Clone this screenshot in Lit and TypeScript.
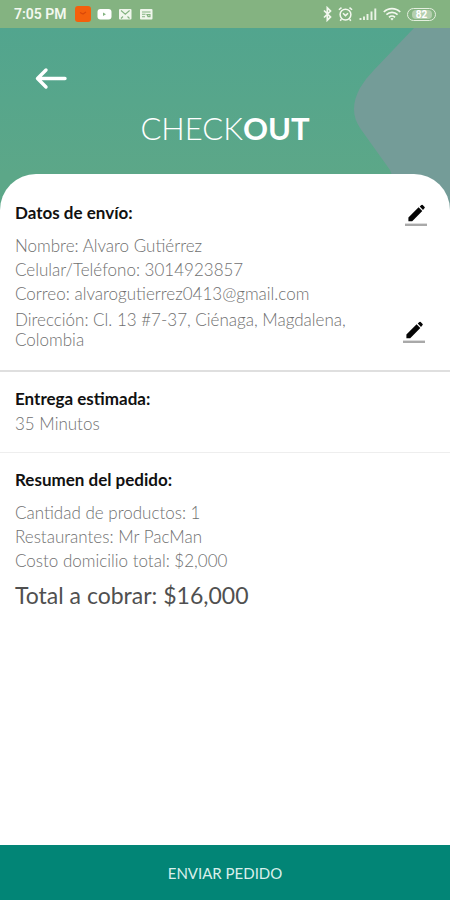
import { LitElement, html, css } from "lit";
import { customElement, property } from "lit/decorators.js";

@customElement("status-bar")
class StatusBar extends LitElement {
  static styles = css`
    :host {
      display: flex;
      align-items: center;
      justify-content: space-between;
      height: 28px;
      padding: 0 14px;
      background: #84b381;
      color: #f3f8ef;
      font-family: Roboto, "Liberation Sans", sans-serif;
    }
    .group {
      display: flex;
      align-items: center;
      gap: 6px;
    }
    .time {
      padding-right: 2px;
      font-size: 14px;
      line-height: 16px;
      font-weight: 600;
    }
    svg {
      display: block;
    }
    .battery {
      box-sizing: border-box;
      display: flex;
      align-items: center;
      justify-content: center;
      width: 29px;
      height: 13px;
      border: 1px solid #e4efdf;
      border-radius: 7px;
      padding: 1px 3px;
    }
    .charge {
      width: 20px;
      border-radius: 4px;
      background: #b4cfae;
      font-size: 10px;
      line-height: 9px;
      font-weight: 700;
      text-align: center;
      color: #ffffff;
    }
  `;

  render() {
    return html`
      <div class="group">
        <span class="time">7:05 PM</span>
        <svg width="16" height="16" viewBox="0 0 16 16" aria-hidden="true">
          <rect width="16" height="16" rx="3" fill="#f4600c" />
          <path d="M5 6.5l3 1.5 3-2" fill="none" stroke="#d9480a" stroke-width="1.2" />
        </svg>
        <svg width="15" height="16" viewBox="0 0 15 16" aria-hidden="true">
          <rect x="0.5" y="3" width="14" height="10.5" rx="3" fill="#fff" />
          <path d="M6 6.4v3.6l3-1.8z" fill="#84b381" />
        </svg>
        <svg width="15" height="16" viewBox="0 0 15 16" aria-hidden="true">
          <rect x="1" y="3" width="12.5" height="10.5" rx="1" fill="#eff6ec" />
          <path d="M3 4.5l4.300 3.700 4.300-3.700M3 12.500l2-2M11.500 12.500l-2-2" fill="none" stroke="#84b381" stroke-width="1.100" />
        </svg>
        <svg width="15" height="16" viewBox="0 0 15 16" aria-hidden="true">
          <rect x="1" y="3" width="12.5" height="10.5" rx="1" fill="#eff6ec" />
          <path d="M3 6h8.5M3 8.3h3.5M3 10.8h3M8 8.6h3v2H9z" fill="none" stroke="#84b381" stroke-width="1.1" />
        </svg>
      </div>
      <div class="group">
        <svg width="9" height="16" viewBox="0 0 9 16" aria-hidden="true">
          <path d="M1 4.500l6.500 6.500-3.200 3.200V1.800l3.200 3.200L1 11.500" fill="none" stroke="#f3f8ef" stroke-width="1.700" />
        </svg>
        <svg width="15" height="16" viewBox="0 0 15 16" aria-hidden="true">
          <circle cx="7.5" cy="8.6" r="5.4" fill="none" stroke="#f3f8ef" stroke-width="1.5" />
          <path d="M5 7.200l2.500 2.400L10 7.200M.9 3.800l2.600-2.200M14.100 3.800l-2.600-2.200M3.400 13.200L2.200 14.800M11.600 13.200l1.200 1.600" fill="none" stroke="#f3f8ef" stroke-width="1.500" />
        </svg>
        <svg width="18" height="16" viewBox="0 0 18 16" aria-hidden="true">
          <path d="M1.500 14v-2M5 14v-3.500M8.500 14V8M12.500 14V5.500M16.300 14V2.500" stroke="#eaf3e6" stroke-width="1.900" />
        </svg>
        <svg width="18" height="16" viewBox="0 0 18 16" aria-hidden="true">
          <path d="M.8 6a11.600 11.600 0 0 1 16.400 0M3.400 8.700a8 8 0 0 1 11.200 0M6 11.300a4.300 4.300 0 0 1 6 0" fill="none" stroke="#f3f8ef" stroke-width="1.700" />
          <path d="M9 14.600l-1.600-1.800a2.400 2.400 0 0 1 3.200 0z" fill="#f3f8ef" />
        </svg>
        <div class="battery"><span class="charge">82</span></div>
      </div>
    `;
  }
}

@customElement("edit-button")
class EditButton extends LitElement {
  @property() label = "";

  static styles = css`
    :host {
      display: block;
    }
    button {
      display: block;
      border: 0;
      padding: 0;
      background: none;
      cursor: pointer;
    }
    svg {
      display: block;
    }
  `;

  render() {
    return html`
      <button type="button" aria-label=${this.label}>
        <svg width="24" height="26" viewBox="0 -3 24 26" aria-hidden="true">
          <path d="M4.400 18.200v-3.800L14.600 4.200l3.700 3.700L8.200 18.200zM15.700 3.500l1.700-1.600q.7-.5 1.300 0l1.900 2q.5.600 0 1.200L19 6.900z" fill="#050505" />
          <path d="M1 21.800h22" stroke="#a9a9a9" stroke-width="2.400" />
        </svg>
      </button>
    `;
  }
}

@customElement("app-root")
class AppRoot extends LitElement {
  static styles = css`
    :host {
      display: flex;
      flex-direction: column;
      min-height: 100vh;
      background: #57a58c;
      color: #707070;
      font-family: Lato, "Liberation Sans", sans-serif;
      font-weight: 300;
    }
    .stage {
      position: relative;
      flex: 1;
      display: flex;
      flex-direction: column;
      background: linear-gradient(#52a58e, #5ca788 146px);
    }
    .blob {
      position: absolute;
      top: 0;
      right: 0;
    }
    header {
      position: relative;
      display: flex;
      flex-direction: column;
      padding: 36px 34px 26px;
    }
    .back {
      align-self: flex-start;
      border: 0;
      padding: 0;
      background: none;
      cursor: pointer;
    }
    svg {
      display: block;
    }
    h1 {
      margin: 0;
      padding-top: 16px;
      font-size: 31px;
      line-height: 40px;
      font-weight: 300;
      text-align: center;
      color: #ffffff;
    }
    h1 strong {
      font-weight: 700;
    }
    main {
      position: relative;
      flex: 1;
      border-radius: 36px 36px 0 0;
      background: #ffffff;
    }
    section {
      padding: 14px 15px 16px;
      border-bottom: 1px solid #eeeeee;
    }
    .shipping {
      padding: 26px 15px 20px;
      border-bottom: 2px solid #dfdfdf;
    }
    .summary {
      border-bottom: 0;
    }
    .row {
      display: flex;
      align-items: center;
      justify-content: space-between;
      padding-right: 7px;
    }
    .address {
      padding: 4px 9px 0 0;
    }
    .address p {
      max-width: 360px;
      line-height: 20px;
    }
    h2 {
      margin: 0;
      font-size: 17px;
      line-height: 26px;
      font-weight: 700;
      color: #111111;
    }
    p {
      margin: 0;
      font-size: 17px;
      line-height: 24px;
    }
    .lines {
      padding-top: 8px;
    }
    .total {
      padding-top: 6px;
      font-size: 23px;
      line-height: 32px;
      font-weight: 400;
      color: #505050;
    }
    .send {
      border: 0;
      padding: 0;
      height: 55px;
      background: #028576;
      color: #d9efeb;
      font: 400 15px/24px Lato, "Liberation Sans", sans-serif;
      cursor: pointer;
    }
  `;

  render() {
    return html`
      <status-bar></status-bar>
      <div class="stage">
        <svg class="blob" width="100" height="200" viewBox="0 0 100 200" aria-hidden="true">
          <path d="M64 0H100V200H62L40 142L10 100Q-2 82 10 60Q16 50 24 42Z" fill="#749c98" />
        </svg>
        <header>
          <button class="back" type="button" aria-label="Volver">
            <svg width="34" height="28" viewBox="0 0 34 28" aria-hidden="true">
              <path d="M31 14.500H4M12 6L3.500 14.500L12 23" fill="none" stroke="#fff" stroke-width="3.400" stroke-linecap="round" stroke-linejoin="round" />
            </svg>
          </button>
          <h1>CHECK<strong>OUT</strong></h1>
        </header>
        <main>
          <section class="shipping">
            <div class="row">
              <h2>Datos de envío:</h2>
              <edit-button label="Editar datos de envío"></edit-button>
            </div>
            <div class="lines">
              <p>Nombre: Alvaro Gutiérrez</p>
              <p>Celular/Teléfono: 3014923857</p>
              <p>Correo: alvarogutierrez0413@gmail.com</p>
            </div>
            <div class="row address">
              <p>Dirección: Cl. 13 #7-37, Ciénaga, Magdalena, Colombia</p>
              <edit-button label="Editar dirección"></edit-button>
            </div>
          </section>
          <section>
            <h2>Entrega estimada:</h2>
            <p>35 Minutos</p>
          </section>
          <section class="summary">
            <h2>Resumen del pedido:</h2>
            <div class="lines">
              <p>Cantidad de productos: 1</p>
              <p>Restaurantes: Mr PacMan</p>
              <p>Costo domicilio total: $2,000</p>
            </div>
            <p class="total">Total a cobrar: $16,000</p>
          </section>
        </main>
      </div>
      <button class="send" type="button">ENVIAR PEDIDO</button>
    `;
  }
}
